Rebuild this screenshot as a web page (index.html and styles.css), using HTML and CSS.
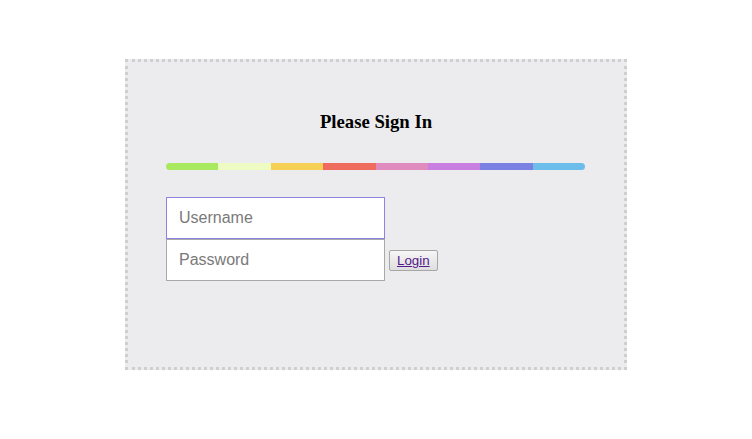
FILE: index.html
```html
<!DOCTYPE html>
<html lang="en">
<head>
<meta charset="utf-8">
<title>Please Sign In</title>
<link rel="stylesheet" href="styles.css">
</head>
<body>
<div class="panel">
  <h3 class="title">Please Sign In</h3>
  <div class="rainbow">
    <span class="seg seg-1"></span>
    <span class="seg seg-2"></span>
    <span class="seg seg-3"></span>
    <span class="seg seg-4"></span>
    <span class="seg seg-5"></span>
    <span class="seg seg-6"></span>
    <span class="seg seg-7"></span>
    <span class="seg seg-8"></span>
  </div>
  <form class="login-form" onsubmit="return false">
    <input class="field field-user" type="text" placeholder="Username" autofocus>
    <div class="pass-row">
      <input class="field field-pass" type="password" placeholder="Password">
      <button class="login-btn" type="submit"><a class="login-link" href="#">Login</a></button>
    </div>
  </form>
</div>
</body>
</html>
```

FILE: styles.css
```css
html, body {
  margin: 0;
  padding: 0;
  background: #ffffff;
}

.panel {
  box-sizing: border-box;
  width: 502px;
  height: 311px;
  margin: 59px auto 0;
  padding: 49px 38px 0 38px;
  background: #ececee;
  border: 3px dotted #cfcfcf;
}

.title {
  margin: 0;
  text-align: center;
  font-family: "Liberation Serif", "Times New Roman", serif;
  font-size: 18.72px;
  font-weight: bold;
  line-height: 21px;
  color: #000;
}

.rainbow {
  display: flex;
  width: 419px;
  height: 7px;
  margin-top: 31px;
  border-radius: 4px;
  overflow: hidden;
}

.seg { flex: 1; }
.seg-1 { background: #a9e960; }
.seg-2 { background: #eefcc4; }
.seg-3 { background: #f6d054; }
.seg-4 { background: #ee6b5e; }
.seg-5 { background: #e08bbd; }
.seg-6 { background: #c97fdf; }
.seg-7 { background: #7b80e3; }
.seg-8 { background: #6cbde9; }

.login-form {
  display: flex;
  flex-direction: column;
  margin-top: 27px;
}

.pass-row {
  display: flex;
  align-items: center;
  gap: 4px;
}

.field {
  box-sizing: border-box;
  width: 219px;
  height: 42px;
  margin: 0;
  padding: 0 11px 0 12px;
  background: #ffffff;
  border: 1px solid #a9a9a9;
  border-radius: 0;
  font-family: "Liberation Sans", Arial, sans-serif;
  font-size: 16px;
  color: #222;
  outline: none;
}

.field::placeholder {
  color: #7a7a7a;
}

.field-user {
  border-color: #8d84e2;
}

.field:focus {
  outline: none;
  border-color: #8d84e2;
}

.login-btn {
  box-sizing: border-box;
  height: 21px;
  margin: 1px 0 0 0;
  padding: 0 7px;
  border: 1px solid #a6a6a6;
  border-radius: 2px;
  background: linear-gradient(#f6f6f6, #dedede);
  font-family: "Liberation Sans", Arial, sans-serif;
  font-size: 13.33px;
  line-height: 17px;
}

.login-link {
  color: #551a8b;
  text-decoration: underline;
}
```
